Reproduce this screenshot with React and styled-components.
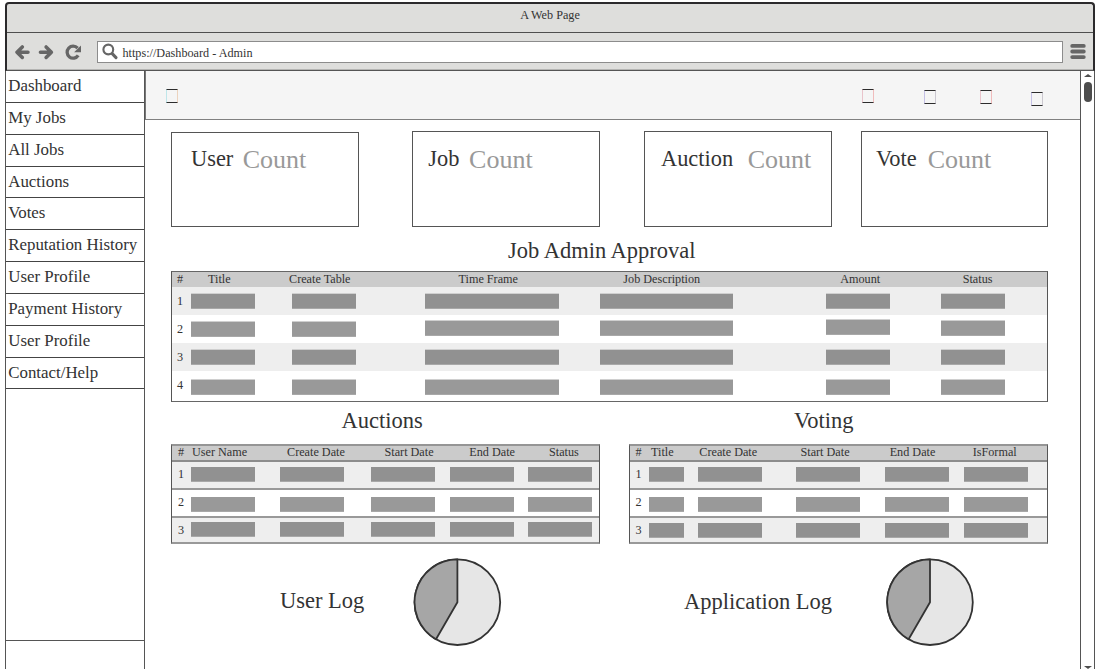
import React from "react";
import styled, { createGlobalStyle } from "styled-components";

const GlobalStyle = createGlobalStyle`
  * { box-sizing: border-box; }
  html, body { margin: 0; padding: 0; background: #fff; overflow: hidden; }
  body { font-family: "Liberation Serif", "Times New Roman", serif; color: #333; }
`;

const Window = styled.div`
  width: 1109px;
  height: 669px;
  padding: 2px 14px 0 5px;
  display: flex;
  flex-direction: column;
  overflow: hidden;
`;

const Chrome = styled.header`
  flex: none;
  height: 69px;
  background: #dededc;
  border: 2px solid #2b2a2c;
  border-bottom: 1px solid #555;
  border-radius: 4px 4px 0 0;
`;

const TitleBar = styled.div`
  height: 29px;
  border-bottom: 1px solid #4f4f4f;
  text-align: center;
  font-size: 12.2px;
  line-height: 22px;
`;

const Toolbar = styled.div`
  height: 37px;
  display: flex;
  align-items: center;
  padding: 1px 7px 0 8px;
  border-bottom: 1px solid #b4b4b2;
`;

const NavIcons = styled.svg`
  width: 68px;
  height: 18px;
  flex: none;
  margin-right: 14px;
`;

const AddressBar = styled.div`
  flex: 1;
  height: 22px;
  display: flex;
  align-items: center;
  gap: 4.5px;
  padding-left: 4px;
  background: #fff;
  border: 1px solid #8c8c8c;
  font-size: 12.2px;
  line-height: 18px;
`;

const Address = styled.span`
  padding-top: 2px;
`;

const SearchIcon = styled.svg`
  width: 16px;
  height: 17px;
  flex: none;
`;

const MenuIcon = styled.svg`
  width: 16px;
  height: 17px;
  flex: none;
  margin-left: 7px;
`;

const Body = styled.div`
  flex: 1;
  min-height: 0;
  display: flex;
  border-left: 1px solid #555;
  border-right: 1px solid #555;
`;

const Sidebar = styled.nav`
  width: 139px;
  flex: none;
  display: flex;
  flex-direction: column;
  border-right: 1px solid #555;
`;

const NavItem = styled.div`
  flex: none;
  height: 31.85px;
  padding-left: 2.2px;
  border-bottom: 1px solid #444;
  font-size: 16.9px;
  line-height: 30px;
  white-space: nowrap;
`;

const SidebarFill = styled.div`
  height: 251.5px;
  flex: none;
  border-bottom: 1px solid #555;
`;

const Main = styled.main`
  flex: 1;
  min-width: 0;
`;

const AppBar = styled.div`
  height: 49px;
  display: flex;
  align-items: flex-start;
  background: #f5f5f5;
  border-left: 1px solid #777;
  border-bottom: 1px solid #808080;
`;

const Glyph = styled.span`
  flex: none;
  width: 12px;
  height: 14px;
  margin: ${(p) => p.$top}px 0 0 ${(p) => p.$gap}px;
  border: 1px solid #2c2c2c;
  border-left-color: ${(p) => p.$left};
  border-right-color: ${(p) => p.$right};
`;

const Content = styled.div`
  width: 903px;
  padding: 11px 0 0 26px;
`;

const Cards = styled.div`
  display: flex;
  height: 96px;
`;

const Card = styled.section`
  flex: none;
  width: ${(p) => p.$width}px;
  margin: ${(p) => p.$top || 0}px 0 0 ${(p) => p.$gap}px;
  padding-left: ${(p) => p.$inset}px;
  display: flex;
  align-items: baseline;
  border: 1px solid #555;
  font-size: 22.4px;
  line-height: ${(p) => (p.$top ? 50 : 52)}px;
`;

const Count = styled.span`
  margin-left: ${(p) => p.$gap}px;
  font-size: 26px;
  color: #999;
  position: relative;
  top: 2px;
`;

const Heading = styled.h2`
  margin: 0;
  font-weight: 400;
  font-size: 22.5px;
  white-space: nowrap;
  height: ${(p) => p.$height}px;
  padding-top: ${(p) => p.$top || 0}px;
  padding-left: ${(p) => p.$inset}px;
  line-height: ${(p) => p.$line}px;
`;

const Table = styled.div`
  width: ${(p) => p.$width}px;
  border: 1px solid #555;
  border-width: ${(p) => (p.$ruled ? "2px 1px" : "1px")};
  border-top-color: ${(p) => (p.$ruled ? "#959595" : "#666")};
  border-bottom-color: ${(p) => (p.$ruled ? "#999" : "#666")};
  font-size: 12.2px;
`;

const HeadRow = styled.div`
  display: grid;
  grid-template-columns: ${(p) => p.$tracks};
  height: ${(p) => (p.$ruled ? 16 : 15)}px;
  line-height: ${(p) => (p.$ruled ? 12 : 14)}px;
  background: #cbcbcb;
  border-bottom: ${(p) => (p.$ruled ? "2px solid #8c8c8c" : "none")};
  white-space: nowrap;
`;

const Row = styled.div`
  display: grid;
  grid-template-columns: ${(p) => p.$tracks};
  align-items: start;
  height: ${(p) => p.$height}px;
  line-height: ${(p) => (p.$ruled ? 24 : 28)}px;
  background: ${(p) => (p.$shaded ? "#eee" : "#fff")};
  border-bottom: ${(p) => (p.$rule ? "2px solid #999" : "none")};
`;

const Bar = styled.div`
  width: ${(p) => p.$width}px;
  height: ${(p) => p.$height}px;
  margin-top: ${(p) => p.$top}px;
  background: ${(p) => (p.$shaded ? "#919191" : "#999")};
  border-top: ${(p) => (p.$height === 16 ? 1 : 0)}px solid #cfcfcf;
  border-bottom: 1px solid #a8a8a8;
`;

const Panels = styled.div`
  display: grid;
  grid-template-columns: 429px 419px;
  column-gap: 29px;
`;

const Log = styled.section`
  display: flex;
  align-items: flex-start;
  padding: 14px 0 0 ${(p) => p.$inset}px;
`;

const LogTitle = styled.h2`
  margin: 0;
  width: ${(p) => p.$width}px;
  font-weight: 400;
  font-size: 22.5px;
  line-height: ${(p) => p.$line}px;
  white-space: nowrap;
`;

const PieSvg = styled.svg`
  width: 90px;
  height: 90px;
  flex: none;
`;

const Scrollbar = styled.aside`
  width: 14px;
  flex: none;
  display: flex;
  flex-direction: column;
  align-items: center;
  justify-content: space-between;
  border-left: 1px solid #555;
`;

const ScrollTop = styled.div`
  display: flex;
  flex-direction: column;
  align-items: center;
  gap: 5px;
  padding-top: 3px;
`;

const Arrow = styled.span`
  border: 4px solid transparent;
  border-width: ${(p) => (p.$down ? "3px 4px 0" : "0 4px 3px")};
  border-top-color: ${(p) => (p.$down ? "#4d4d4d" : "transparent")};
  border-bottom-color: ${(p) => (p.$down ? "transparent" : "#4d4d4d")};
`;

const Thumb = styled.span`
  width: 8px;
  height: 20px;
  border-radius: 4px;
  background: #4d4d4d;
`;

const tracks = (starts) =>
  [0, ...starts]
    .map((s, i, all) => (i < all.length - 1 ? `${all[i + 1] - s}px` : "1fr"))
    .join(" ");

const navItems = [
  "Dashboard", "My Jobs", "All Jobs", "Auctions", "Votes",
  "Reputation History", "User Profile", "Payment History", "User Profile", "Contact/Help",
];

const cards = [
  { label: "User", gap: 0, width: 188, inset: 19, countGap: 9.5, top: 1 },
  { label: "Job", gap: 53, width: 188, inset: 15.3, countGap: 9.7 },
  { label: "Auction", gap: 44, width: 188, inset: 16, countGap: 14.5 },
  { label: "Vote", gap: 29, width: 187, inset: 14, countGap: 11 },
];

const approval = {
  width: 877,
  heads: [["#", 5], ["Title", 36], ["Create Table", 117], ["Time Frame", 286.5], ["Job Description", 451.3], ["Amount", 668.2], ["Status", 790.7]],
  numberAt: 5,
  bars: [[19, 64], [120, 64], [253, 134], [428, 133], [654, 64], [769, 64]],
  rows: [
    { height: 28, barHeight: 16, tops: [6, 6, 6, 6, 6, 6] },
    { height: 28, barHeight: 16, tops: [6, 6, 5, 5, 4, 5] },
    { height: 28, barHeight: 16, tops: [6, 6, 6, 6, 6, 6] },
    { height: 30, barHeight: 16, tops: [8, 8, 8, 8, 8, 8] },
  ],
};

const auctions = {
  ruled: true,
  width: 429,
  heads: [["#", 6], ["User Name", 20], ["Create Date", 115], ["Start Date", 212.5], ["End Date", 297.3], ["Status", 377]],
  numberAt: 6,
  bars: [[19, 64], [108, 64], [199, 64], [278, 64], [356, 64]],
  rows: [
    { height: 28, barHeight: 15, tops: [5, 5, 5, 5, 5] },
    { height: 28, barHeight: 15, tops: [7, 7, 7, 7, 7] },
    { height: 24, barHeight: 15, tops: [4, 4, 4, 4, 4] },
  ],
};

const voting = {
  ruled: true,
  width: 419,
  heads: [["#", 5.5], ["Title", 21], ["Create Date", 69.3], ["Start Date", 170.5], ["End Date", 259.7], ["IsFormal", 342.7]],
  numberAt: 5.6,
  bars: [[19, 35], [68, 64], [166, 64], [255, 64], [334, 64]],
  rows: [
    { height: 28, barHeight: 15, tops: [5, 5, 5, 5, 5] },
    { height: 28, barHeight: 15, tops: [7, 7, 7, 7, 7] },
    { height: 24, barHeight: 15, tops: [5, 5, 5, 5, 5] },
  ],
};

function DataTable({ data }) {
  const rowTracks = tracks([data.numberAt, ...data.bars.map((b) => b[0])]);
  return (
    <Table $width={data.width} $ruled={data.ruled}>
      <HeadRow $ruled={data.ruled} $tracks={tracks(data.heads.map((h) => h[1]))}>
        <span />
        {data.heads.map(([text]) => <span key={text}>{text}</span>)}
      </HeadRow>
      {data.rows.map((row, i) => (
        <Row
          key={i}
          $tracks={rowTracks}
          $height={row.height}
          $ruled={data.ruled}
          $rule={data.ruled && i < data.rows.length - 1}
          $shaded={i % 2 === 0}
        >
          <span />
          <span>{i + 1}</span>
          {data.bars.map(([, width], j) => (
            <Bar key={j} $width={width} $height={row.barHeight} $top={row.tops[j]} $shaded={i % 2 === 0} />
          ))}
        </Row>
      ))}
    </Table>
  );
}

function Pie({ cx }) {
  return (
    <PieSvg viewBox="0 0 90 90" stroke="#333" strokeWidth="1.8" strokeLinejoin="round">
      <circle cx={cx} cy="44.2" r="42.8" fill="#e6e6e6" />
      <path d={`M${cx} 44.2 V1.4 A42.8 42.8 0 0 0 ${cx - 21.4} 81.3 Z`} fill="#a6a6a6" />
    </PieSvg>
  );
}

export default function App() {
  return (
    <>
      <GlobalStyle />
      <Window>
        <Chrome>
          <TitleBar>A Web Page</TitleBar>
          <Toolbar>
            <NavIcons viewBox="0 0 68 18" fill="none" stroke="#666" strokeLinecap="round" strokeLinejoin="round">
              <path d="M7.3 3.9 2 9.2l5.3 5.3M2.4 9.2h10.6" strokeWidth="3.5" />
              <path d="M31.1 3.9 36.4 9.2l-5.3 5.3M36 9.2H25.4" strokeWidth="3.5" />
              <path d="M63.2 12.4A6 6 0 1 1 62.6 5.2" strokeWidth="3.3" strokeLinecap="butt" />
              <path d="M66 2.4V9.3H59.1Z" fill="#666" stroke="none" />
            </NavIcons>
            <AddressBar>
              <SearchIcon viewBox="0 0 16 17" fill="none" stroke="#666">
                <circle cx="6.3" cy="6.5" r="4.9" strokeWidth="2.1" />
                <path d="M10.2 10.6 14 14.6" strokeWidth="3" strokeLinecap="round" />
              </SearchIcon>
              <Address>https://Dashboard - Admin</Address>
            </AddressBar>
            <MenuIcon viewBox="0 0 16 17" stroke="#666" strokeWidth="3.8" strokeLinecap="round">
              <path d="M2.2 2.9h11.6M2.2 8.5h11.6M2.2 14.1h11.6" />
            </MenuIcon>
          </Toolbar>
        </Chrome>
        <Body>
          <Sidebar>
            {navItems.map((item, i) => <NavItem key={i}>{item}</NavItem>)}
            <SidebarFill />
          </Sidebar>
          <Main>
            <AppBar>
              <Glyph $gap={20} $top={18} $left="#bfe6ea" $right="#ecd3be" />
              <Glyph $gap={684} $top={18} $left="#e9c4cb" $right="#f0bcbc" />
              <Glyph $gap={50} $top={19} $left="#c5c1e6" $right="#cbc8d0" />
              <Glyph $gap={44} $top={19} $left="#e9c4cb" $right="#f0bcbc" />
              <Glyph $gap={39} $top={21} $left="#c5c1e6" $right="#cbc8d0" />
            </AppBar>
            <Content>
              <Cards>
                {cards.map((c) => (
                  <Card key={c.label} $gap={c.gap} $width={c.width} $inset={c.inset} $top={c.top}>
                    {c.label}
                    <Count $gap={c.countGap}>Count</Count>
                  </Card>
                ))}
              </Cards>
              <Heading $height={44} $top={3} $line={41} $inset={337}>Job Admin Approval</Heading>
              <DataTable data={approval} />
              <Panels>
                <section>
                  <Heading $height={42} $line={37} $inset={170.5}>Auctions</Heading>
                  <DataTable data={auctions} />
                  <Log $inset={109}>
                    <LogTitle $width={133} $line={85}>User Log</LogTitle>
                    <Pie cx={44.4} />
                  </Log>
                </section>
                <section>
                  <Heading $height={42} $line={37} $inset={165}>Voting</Heading>
                  <DataTable data={voting} />
                  <Log $inset={55}>
                    <LogTitle $width={202} $line={87}>Application Log</LogTitle>
                    <Pie cx={44} />
                  </Log>
                </section>
              </Panels>
            </Content>
          </Main>
          <Scrollbar>
            <ScrollTop>
              <Arrow />
              <Thumb />
            </ScrollTop>
            <Arrow $down />
          </Scrollbar>
        </Body>
      </Window>
    </>
  );
}
